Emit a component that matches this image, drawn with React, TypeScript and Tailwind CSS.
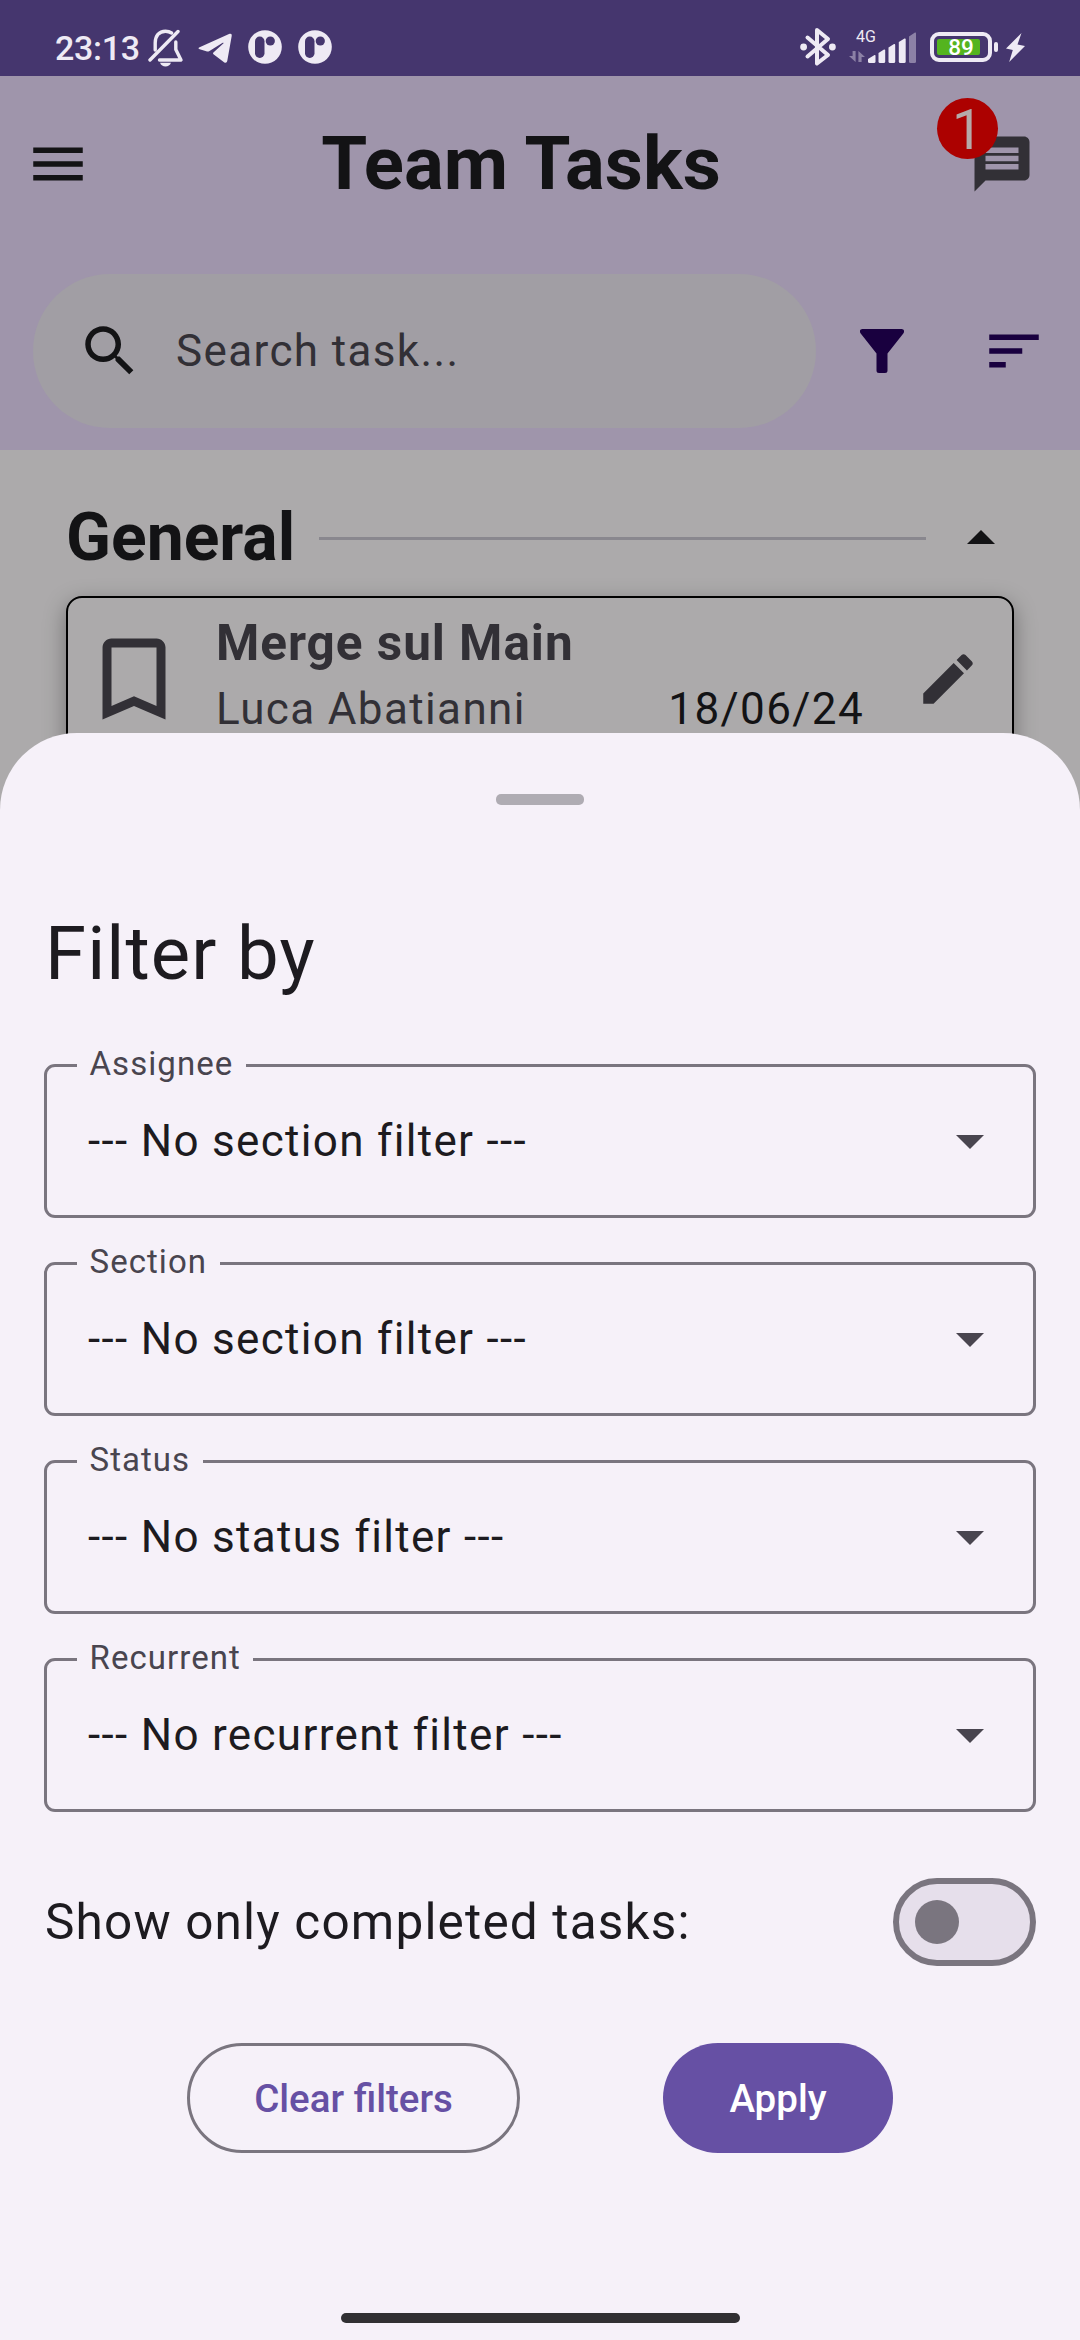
import React from "react";

function StatusBar() {
  return (
    <div className="flex h-[76px] w-full items-start bg-[#45366e] text-[#eeeaf4]">
      <span className="ml-[55px] mt-[28px] w-[93px] text-[34px] font-medium leading-[40px] tracking-[-0.3px] whitespace-nowrap">23:13</span>
      <svg className="mt-[28px] h-[40px] w-[36px]" viewBox="0 0 36 40" fill="none" stroke="currentColor" strokeWidth="3.4" strokeLinecap="round">
        <path d="M7.2 22V15C7.2 8 11 3.2 17.5 3.2C20 3.2 22 3.9 23.6 5" />
        <path d="M27.8 14V21.5L33 32H11.5" strokeLinejoin="round" />
        <path d="M2 32L30 3.5" />
        <path d="M12 34.8H23C22 37.3 20 38.6 17.5 38.6S13 37.3 12 34.8Z" fill="currentColor" stroke="none" />
      </svg>
      <svg className="ml-[14px] mt-[33px] h-[31px] w-[34px]" viewBox="0 0 34 31" fill="currentColor">
        <path d="M1.6 14.2L31 1.1C33 .3 34 1 33.7 3L29.3 27.8C28.9 29.8 27.6 30.3 26 29.2L15.8 21.6C14.8 20.8 14.8 20 15.7 19.2L25.3 10.6C26 9.7 25.2 9.4 24.3 10L11.5 18C10.4 18.6 9.4 18.7 8.3 18.3L1.7 16.2C.1 15.7.1 14.9 1.6 14.2Z" />
      </svg>
      <AppDot className="ml-[16px]" />
      <AppDot className="ml-[16px]" />
      <svg className="ml-[468px] mt-[27px] h-[40px] w-[36px]" viewBox="0 0 36 40" fill="none" stroke="currentColor" strokeWidth="4" strokeLinejoin="round" strokeLinecap="round">
        <path d="M7.5 10.5L28 28L17 36.5V3L28 12L7.5 29.5" />
        <circle cx="3.6" cy="20" r="3.4" fill="currentColor" stroke="none" />
        <circle cx="32.4" cy="20" r="3.4" fill="currentColor" stroke="none" />
      </svg>
      <div className="relative ml-[13px] mt-[28px] h-[36px] w-[67px]">
        <span className="absolute left-[7px] top-0 text-[16px] leading-[17px]">4G</span>
        <svg className="h-[36px] w-[67px]" viewBox="0 0 67 36" fill="currentColor">
          <g opacity=".42">
            <path d="M3.6 23H6.6V34L0 28H3.6Z" />
            <path d="M9.4 34V23L16 29H12.6V34Z" />
            <path d="M60 8.5L66 4.5Q67 4 67 5.5V33.5Q67 35 65.5 35H61.5Q60 35 60 33.5Z" />
          </g>
          <path d="M19 31L25.5 27Q26.5 26.5 26.5 28V33.5Q26.5 35 25 35H20.5Q19 35 19 33.5Z" />
          <path d="M29.5 25L35 21.5Q36.2 21 36.2 22.5V33.5Q36.2 35 34.7 35H31Q29.5 35 29.5 33.5Z" />
          <path d="M39.5 19.5L45 16Q46.2 15.5 46.2 17V33.5Q46.2 35 44.7 35H41Q39.5 35 39.5 33.5Z" />
          <path d="M49.8 14L55.5 10.5Q56.7 10 56.7 11.5V33.5Q56.7 35 55.2 35H51.3Q49.8 35 49.8 33.5Z" />
        </svg>
      </div>
      <div className="ml-[14px] mt-[32px] flex h-[30px] w-[62px] items-center rounded-[9px] border-4 border-current p-[3px]">
        <div className="flex h-[16px] w-[43px] items-center justify-center rounded-[2px] bg-[#54b41f] pl-[5px]">
          <span className="text-[22.5px] font-medium leading-[18px] text-white">89</span>
        </div>
      </div>
      <div className="ml-[2px] mt-[42px] h-[10px] w-[4px] rounded-[2px] bg-current" />
      <svg className="ml-[8px] mt-[33px] h-[29px] w-[19px]" viewBox="0 0 19 29" fill="currentColor">
        <path d="M15.5 0L0 15.5L6.8 17L3.2 29L19 13L11.5 11.5Z" />
      </svg>
    </div>
  );
}

function AppDot({ className }: { className: string }) {
  return (
    <svg className={`${className} mt-[30px] h-[34px] w-[34px]`} viewBox="0 0 34 34">
      <circle cx="17" cy="17" r="16.8" fill="#eeeaf4" />
      <rect x="7" y="6.5" width="9.5" height="21.5" rx="4.7" fill="#45366e" />
      <circle cx="22.3" cy="11" r="4.6" fill="#45366e" />
    </svg>
  );
}

function Header() {
  return (
    <header className="flex h-[374px] flex-col bg-[#9f95ab]">
      <div className="flex h-[176px] items-center justify-between pl-[25px] pr-[39px]">
        <svg className="h-[66px] w-[66px] text-[#131315]" viewBox="0 0 24 24" fill="currentColor">
          <path d="M3 18h18v-2H3v2zm0-5h18v-2H3v2zm0-7v2h18V6H3z" />
        </svg>
        <h1 className="mr-[18px] text-[74.25px] font-bold leading-[90px] whitespace-nowrap text-[#131315]">Team Tasks</h1>
        <div className="relative h-[66px] w-[72px]">
          <svg className="absolute left-[0.5px] top-[-0.5px] h-[66px] w-[66px] text-[#323036]" viewBox="0 0 24 24" fill="currentColor">
            <path d="M20 2H4c-1.1 0-1.99.9-1.99 2L2 22l4-4h14c1.1 0 2-.9 2-2V4c0-1.1-.9-2-2-2zM6 9h12v2H6V9zm12 5H6v-2h12v2zm0-6H6V6h12v2z" />
          </svg>
          <span className="absolute left-[-32px] top-[-33px] flex h-[61px] w-[61px] items-center justify-center rounded-full bg-[#ac0100] pt-[4px] text-[55px] leading-[61px] text-[#b5aaa9]">1</span>
        </div>
      </div>
      <div className="mt-[22px] flex items-center pl-[33px]">
        <div className="flex h-[154px] w-[783px] items-center rounded-full bg-[#a19ea4] pl-[44px] text-[44px] tracking-[1.375px] text-[#323036]">
          <svg className="h-[66px] w-[66px] text-[#131315]" viewBox="0 0 24 24" fill="currentColor">
            <path d="M15.5 14h-.79l-.28-.27C15.41 12.59 16 11.11 16 9.5 16 5.91 13.09 3 9.5 3S3 5.91 3 9.5 5.91 16 9.5 16c1.61 0 3.09-.59 4.23-1.57l.27.28v.79l5 4.99L20.49 19l-4.99-5zm-6 0C7.01 14 5 11.99 5 9.5S7.01 5 9.5 5 14 7.01 14 9.5 11.99 14 9.5 14z" />
          </svg>
          <span className="ml-[33px] leading-[66px]">Search task...</span>
        </div>
        <svg className="ml-[44px] h-[44px] w-[44px]" viewBox="0 0 44 44" fill="#19003f">
          <path d="M2.5 0H41.5C44 0 44.8 2.5 43.3 4.500L27.5 24.5V41.5Q27.5 44 25 44H19Q16.500 44 16.500 41.500V24.500L.7 4.500C-.8 2.500 0 0 2.500 0Z" />
        </svg>
        <svg className="ml-[77px] h-[66px] w-[66px]" viewBox="0 0 24 24" fill="#19003f">
          <path d="M3 18h6v-2H3v2zM3 6v2h18V6H3zm0 7h12v-2H3v2z" />
        </svg>
      </div>
    </header>
  );
}

function TaskList() {
  return (
    <main className="flex-1 bg-[#acaaab] px-[66px] pt-[44px]">
      <div className="flex h-[88px] items-center pr-[19px]">
        <h2 className="text-[66px] font-bold leading-[88px] text-[#131315]">General</h2>
        <div className="ml-[24px] mr-[41px] h-[3px] flex-1 bg-[#89878e]" />
        <svg className="mb-[3px] h-[14px] w-[28px]" viewBox="0 0 28 14" fill="#131315">
          <path d="M0 14L14 0L28 14Z" />
        </svg>
      </div>
      <div className="mt-[14px] flex h-[190px] rounded-[16px] border-2 border-black bg-[#acaaab] pl-[12px] shadow-[0_7px_22px_rgba(0,0,0,0.35)]">
        <svg className="mt-[27px] h-[108px] w-[108px]" viewBox="0 0 24 24" fill="#323036">
          <path d="M17 3H7c-1.1 0-1.99.9-1.99 2L5 21l7-3 7 3V5c0-1.1-.9-2-2-2zm0 15l-5-2.18L7 18V5h10v13z" />
        </svg>
        <div className="ml-[28px] mt-[12px] w-[648px] text-[#323036]">
          <div className="text-[49.5px] font-bold leading-[66px] tracking-[0.95px]">Merge sul Main</div>
          <div className="flex justify-between text-[44px] leading-[66px] tracking-[1.375px]">
            <span>Luca Abatianni</span>
            <span className="text-[#131315]">18/06/24</span>
          </div>
        </div>
        <svg className="ml-[51px] mt-[48px] h-[66px] w-[66px]" viewBox="0 0 24 24" fill="#323036">
          <path d="M3 17.25V21h3.75L17.81 9.94l-3.75-3.75L3 17.25zM20.71 7.04c.39-.39.39-1.02 0-1.41l-2.34-2.34c-.39-.39-1.02-.39-1.41 0l-1.83 1.83 3.75 3.75 1.83-1.83z" />
        </svg>
      </div>
    </main>
  );
}

function SelectField({ label, value }: { label: string; value: string }) {
  return (
    <div className="relative flex h-[154px] items-center justify-between rounded-[11px] border-[3px] border-[#7a757f] pl-[41px] pr-[49px]">
      <span className="absolute left-[30px] top-[-25px] bg-[#f6f1f9] px-[12.5px] text-[33px] leading-[44px] tracking-[1.05px] text-[#49454f]">{label}</span>
      <span className="text-[44px] leading-[66px] tracking-[1.32px] text-[#1d1b20]">{value}</span>
      <svg className="mt-px h-[14px] w-[28px]" viewBox="0 0 28 14" fill="#49454f">
        <path d="M0 0H28L14 14Z" />
      </svg>
    </div>
  );
}

const FIELDS = [
  { label: "Assignee", value: "--- No section filter ---" },
  { label: "Section", value: "--- No section filter ---" },
  { label: "Status", value: "--- No status filter ---" },
  { label: "Recurrent", value: "--- No recurrent filter ---" },
];

function FilterSheet() {
  return (
    <section className="absolute inset-x-0 top-[733px] bottom-0 flex flex-col rounded-t-[77px] bg-[#f6f1f9] px-[44px]">
      <div className="mt-[61px] h-[11px] w-[88px] self-center rounded-[5px] bg-[#afacb3]" />
      <h2 className="ml-px mt-[104px] text-[74.25px] leading-[90px] tracking-[1.1px] text-[#1d1b20]">Filter by</h2>
      <div className="mt-[65px] flex flex-col gap-[44px]">
        {FIELDS.map((f) => (
          <SelectField key={f.label} label={f.label} value={f.value} />
        ))}
      </div>
      <div className="mt-[66px] flex h-[88px] items-center justify-between">
        <span className="ml-px text-[49.5px] leading-[66px] tracking-[1.17px] text-[#1d1b20]">Show only completed tasks:</span>
        <div className="flex h-[88px] w-[143px] items-center rounded-full border-[6px] border-[#7a757f] bg-[#e6dfeb] pl-[16px]">
          <div className="h-[44px] w-[44px] rounded-full bg-[#7a757f]" />
        </div>
      </div>
      <div className="mt-[77px] flex justify-between px-[143px] text-[38.5px] font-medium leading-[55px]">
        <button className="h-[110px] w-[333px] rounded-full border-[3px] border-[#7a757f] text-[#6650a4]">Clear filters</button>
        <button className="h-[110px] w-[230px] rounded-full bg-[#6650a4] text-white">Apply</button>
      </div>
      <div className="mt-auto mb-[17px] h-[10px] w-[399px] self-center rounded-full bg-[#313033]" />
    </section>
  );
}

export default function App() {
  return (
    <div className="relative flex h-[2340px] w-[1080px] flex-col overflow-hidden font-['Roboto',sans-serif]">
      <StatusBar />
      <Header />
      <TaskList />
      <FilterSheet />
    </div>
  );
}
